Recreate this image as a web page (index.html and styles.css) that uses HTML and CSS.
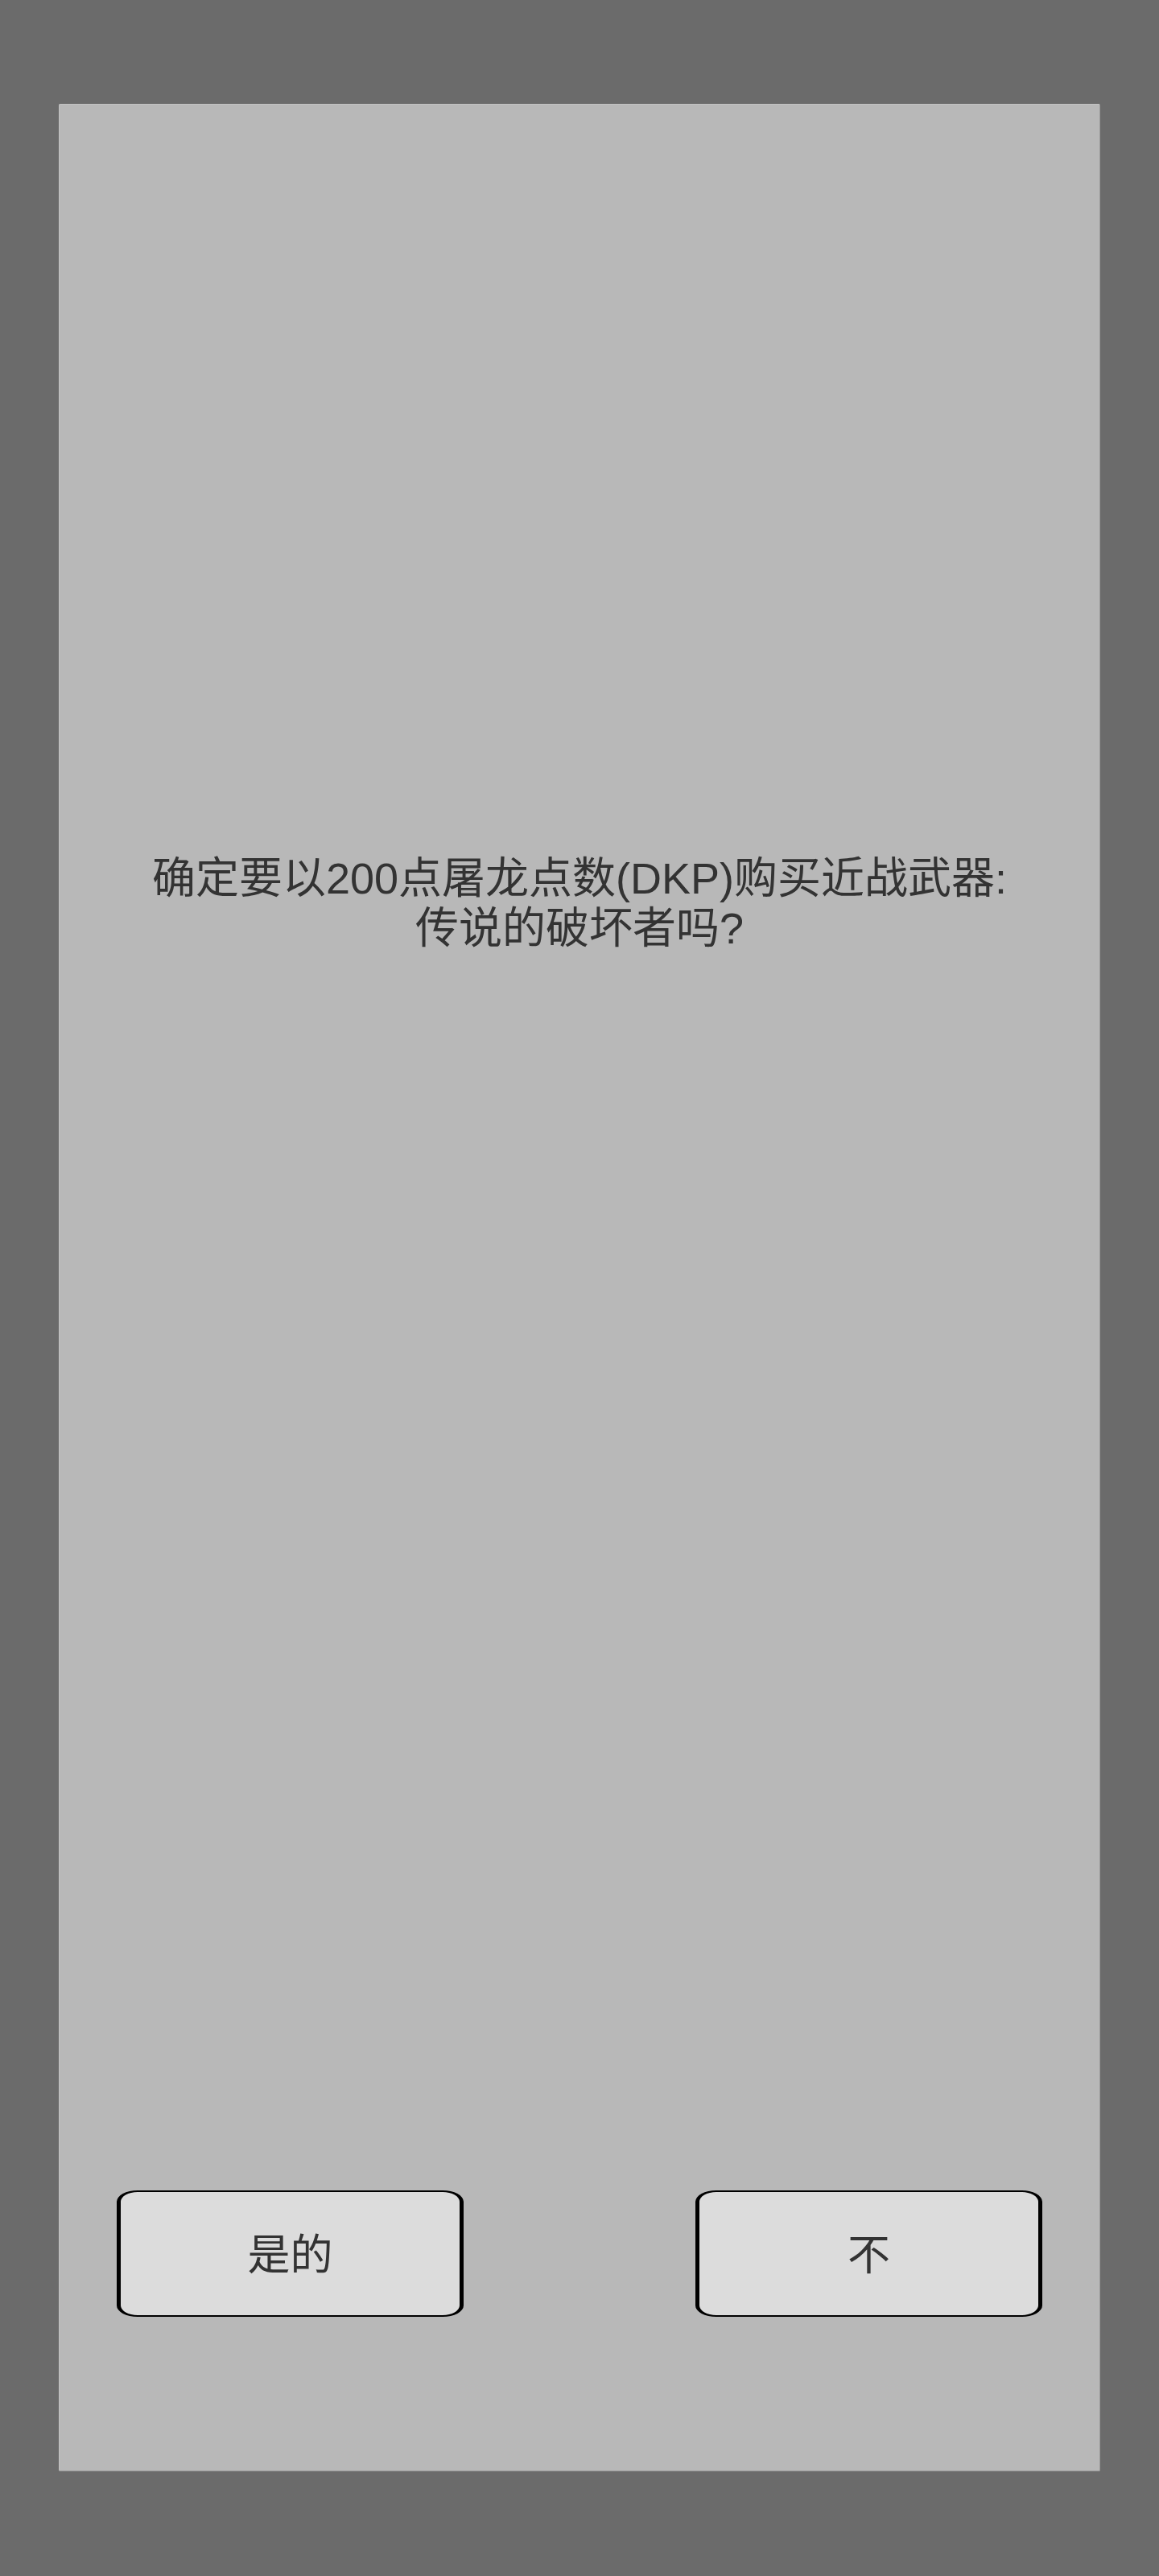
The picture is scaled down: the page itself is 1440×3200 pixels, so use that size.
FILE: index.html
```html
<!DOCTYPE html>
<html lang="zh-CN">
<head>
<meta charset="utf-8">
<title>确认购买</title>
<link rel="stylesheet" href="styles.css">
</head>
<body>
<div class="panel">
  <div class="message">确定要以200点屠龙点数(DKP)购买近战武器:<br>传说的破坏者吗?</div>
  <div class="actions">
    <button class="btn" type="button">是的</button>
    <button class="btn" type="button">不</button>
  </div>
</div>
</body>
</html>
```
FILE: styles.css
```css
html, body {
  margin: 0;
  padding: 0;
}
body {
  background: #6b6b6b;
  width: 1440px;
  height: 3200px;
  overflow: hidden;
  font-family: "Liberation Sans", "Noto Sans CJK SC", sans-serif;
  color: #333333;
}
.panel {
  box-sizing: border-box;
  width: 1294px;
  height: 2941px;
  margin: 129px auto 0;
  background: #b8b8b8;
  border: 1px solid #9a9a9a;
  border-top-color: #c2c2c2;
  border-left-color: #c2c2c2;
  border-radius: 2px;
  display: flex;
  flex-direction: column;
  padding: 930px 71px 191px;
}
.message {
  text-align: center;
  font-size: 54px;
  line-height: 62px;
}
.actions {
  margin-top: auto;
  display: flex;
  justify-content: space-between;
}
.btn {
  box-sizing: border-box;
  width: 431px;
  height: 157px;
  background: #dcdcdc;
  border-style: solid;
  border-color: #000;
  border-width: 2px 5px;
  border-radius: 26px / 14px;
  font-family: "Liberation Sans", "Noto Sans CJK SC", sans-serif;
  font-size: 53px;
  color: #333333;
  padding: 0 0 5px;
  display: flex;
  align-items: center;
  justify-content: center;
}
```
